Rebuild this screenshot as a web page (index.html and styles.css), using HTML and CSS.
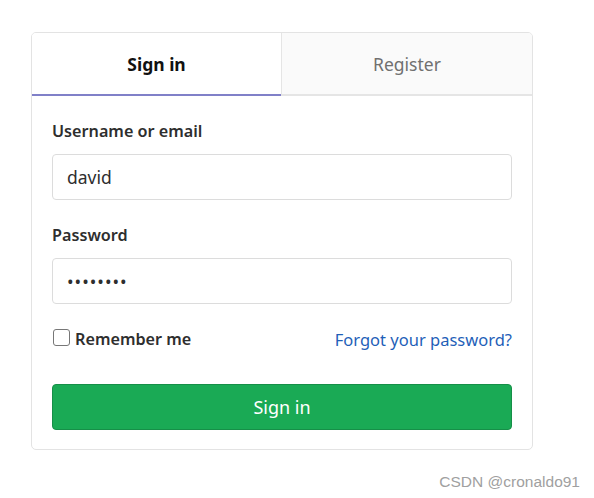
FILE: index.html
```html
<!DOCTYPE html>
<html>
<head>
<meta charset="utf-8">
<link rel="stylesheet" href="styles.css">
</head>
<body>
<div class="page">
  <div class="card">
    <div class="tabs">
      <div class="tab active">Sign in</div>
      <div class="tab">Register</div>
    </div>
    <form class="form">
      <div class="field">
        <label class="label">Username or email</label>
        <input class="input" type="text" value="david">
      </div>
      <div class="field">
        <label class="label">Password</label>
        <input class="input pw" type="password" value="12345678">
      </div>
      <div class="row">
        <label class="remember"><span class="check"></span>Remember me</label>
        <a class="forgot" href="#">Forgot your password?</a>
      </div>
      <button class="btn" type="button">Sign in</button>
    </form>
  </div>
  <div class="watermark">CSDN @cronaldo91</div>
</div>
</body>
</html>
```
FILE: styles.css
```css
* { box-sizing: border-box; }
html, body { margin: 0; padding: 0; background: #fff; }
body {
  font-family: "Noto Sans", "Open Sans", sans-serif;
  color: #2e2e2e;
}
.page {
  padding: 32px 0 0 31px;
  width: 594px;
  height: 498px;
}
.card {
  width: 502px;
  border: 1px solid #e3e3e3;
  border-radius: 5px;
  overflow: hidden;
}
.tabs {
  display: flex;
  height: 63px;
}
.tab {
  flex: 1;
  display: flex;
  align-items: center;
  justify-content: center;
  font-size: 17.5px;
  color: #707070;
  background: #fafafa;
  border-left: 1px solid #e5e5e5;
  border-bottom: 2px solid #e5e5e5;
}
.tab.active {
  flex: 0 0 249px;
  background: #fff;
  color: #111;
  font-weight: 700;
  border-left: none;
  border-bottom: 2px solid #8080c8;
}
.form {
  padding: 23px 20px 19px;
  display: flex;
  flex-direction: column;
}
.field {
  display: flex;
  flex-direction: column;
  margin-bottom: 23px;
}
.label {
  font-size: 16.2px;
  font-weight: 600;
  line-height: 24px;
  color: #2e2e2e;
  margin-bottom: 11px;
}
.input {
  height: 46px;
  border: 1px solid #dcdcdc;
  border-radius: 4px;
  padding: 0 14px;
  font-family: inherit;
  font-size: 17.5px;
  color: #2e2e2e;
  outline: none;
}
.pw { letter-spacing: 1px; }
.row {
  display: flex;
  align-items: center;
  justify-content: space-between;
  height: 24px;
  margin-bottom: 33px;
}
.remember {
  display: flex;
  align-items: center;
  font-size: 16.2px;
  font-weight: 600;
  color: #2e2e2e;
}
.check {
  width: 17px;
  height: 17px;
  border: 1.5px solid #777;
  border-radius: 3px;
  margin: 0 5px 3px 1px;
  background: #fff;
}
.forgot {
  font-size: 16.5px;
  color: #1f5fb8;
  text-decoration: none;
}
.btn {
  height: 46px;
  border: 1px solid #168f48;
  border-radius: 4px;
  background: #1aaa55;
  color: #fff;
  font-family: inherit;
  font-size: 18px;
}
.watermark {
  margin-top: 23px;
  width: 549px;
  text-align: right;
  font-family: "Liberation Sans", Arial, sans-serif;
  font-size: 15.5px;
  color: #a0a0a0;
}
```
